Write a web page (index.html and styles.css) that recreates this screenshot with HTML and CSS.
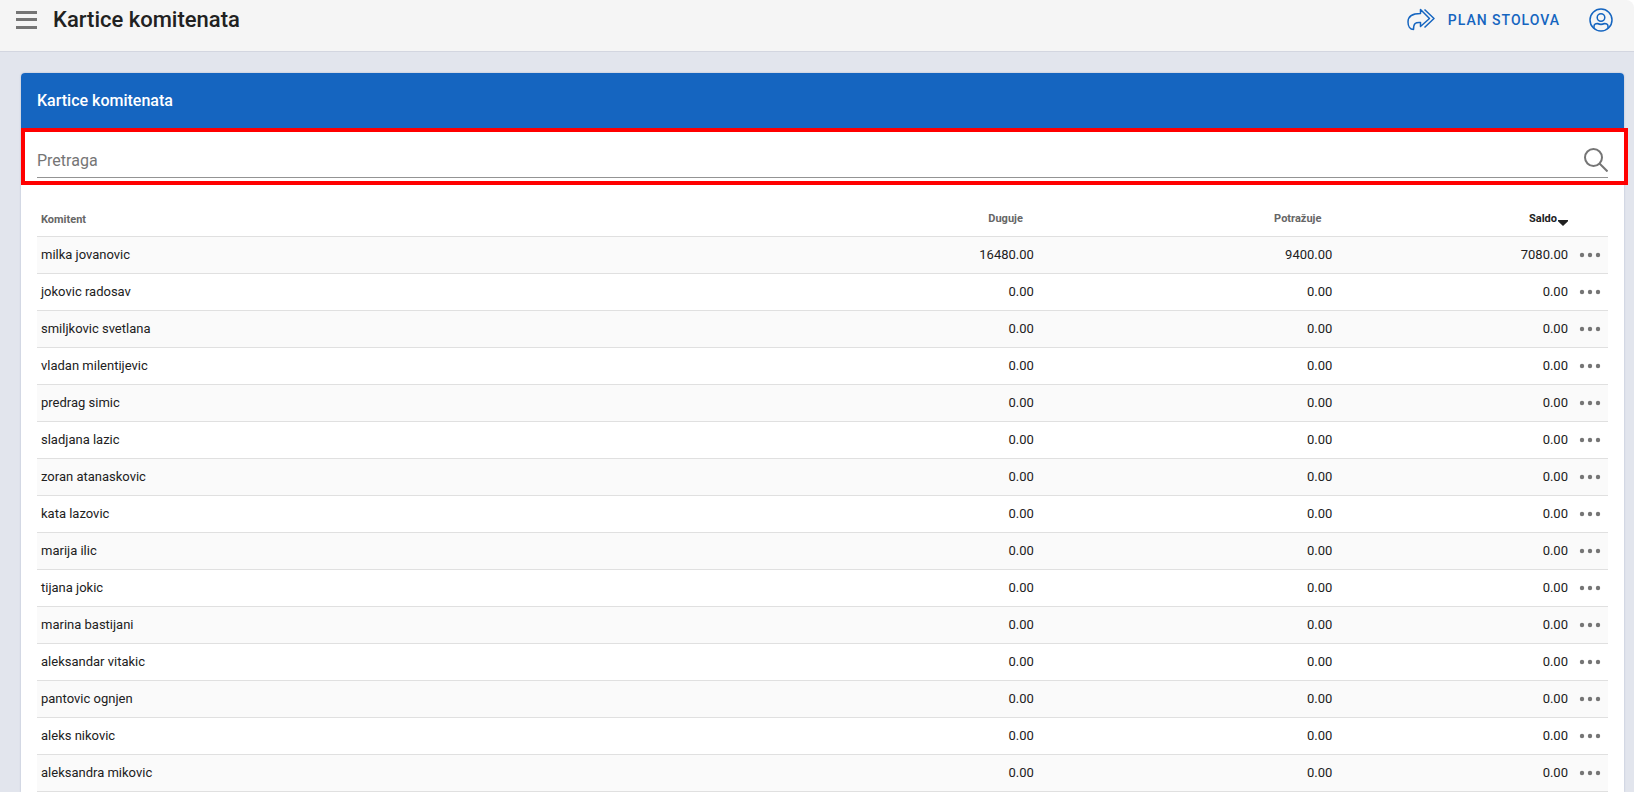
FILE: index.html
```html
<!DOCTYPE html>
<html lang="sr">
<head>
    <meta charset="UTF-8">
    <meta name="viewport" content="width=device-width, initial-scale=1.0">
    <title>Kartice komitenata</title>
    <link rel="stylesheet" href="styles.css">
</head>
<body>
    <header class="topbar">
        <button class="icon-btn menu" type="button" aria-label="Meni">
            <svg width="22" height="20" viewBox="0 0 22 20"><path d="M0 2.5h21M0 9.500h21M0 17.500h21"/></svg>
        </button>
        <h1>Kartice komitenata</h1>
        <a class="plan" href="#">
            <svg width="28" height="24" viewBox="0 0 28 24">
                <path d="M13.500 5.500V1.500L22.500 10.500L13.500 18.500V14.500C8.500 14 6.500 15.500 6.500 21.500C3 21.500 1 18 1 14C1 8.500 5 5.500 13.500 5.500Z"/>
                <path d="M17.500 1.500L27 10.500L17.500 19.500"/>
            </svg>
            Plan stolova
        </a>
        <button class="icon-btn user" type="button" aria-label="Nalog">
            <svg width="24" height="24" viewBox="0 0 24 24">
                <circle cx="12" cy="12" r="11"/>
                <circle cx="12" cy="9.500" r="3.800"/>
                <path d="M5 20.300V18.500C5 16.300 6.500 15.500 8.500 15.500C10.500 16.500 13.500 16.500 15.500 15.500C17.500 15.500 19 16.300 19 18.500V20.300"/>
            </svg>
        </button>
    </header>

    <main class="page">
        <div class="card">
            <h2>Kartice komitenata</h2>
            <form class="search">
                <div class="field">
                    <input type="text" placeholder="Pretraga" aria-label="Pretraga">
                    <button class="icon-btn" type="button" aria-label="Traži">
                        <svg width="24" height="24" viewBox="0 0 24 24"><circle cx="9.500" cy="9.500" r="8.500"/><path d="M15.500 15.500l8 8"/></svg>
                    </button>
                </div>
            </form>
            <div class="card-body">
                <table>
                    <thead>
                        <tr>
                            <th>Komitent</th>
                            <th class="num debit">Duguje</th>
                            <th class="num credit">Potražuje</th>
                            <th class="num saldo">Saldo</th>
                            <th class="actions"></th>
                        </tr>
                    </thead>
                    <tbody id="rows"></tbody>
                </table>
            </div>
        </div>
    </main>

    <script src="script.js"></script>
</body>
</html>
```
FILE: styles.css
```css
*{
    box-sizing: border-box;
}
body{
    margin: 0;
    padding-right: 4px;
    height: 100vh;
    overflow: hidden;
    background: #fff;
    font-family: Roboto, sans-serif;
    color: #212121;
    display: flex;
    flex-direction: column;
}
.icon-btn{
    padding: 0;
    border: 0;
    background: none;
    display: flex;
    cursor: pointer;
}
svg{
    fill: none;
    stroke-linejoin: round;
}
.topbar{
    flex: none;
    height: 52px;
    padding: 0 21px 12px 16px;
    background: #f5f5f5;
    border-bottom: 1px solid #d3d6e0;
    border-radius: 0 8px 0 0;
    display: flex;
    align-items: center;
}
.menu svg{
    stroke: #757575;
    stroke-width: 3;
}
.topbar h1{
    margin: 0 auto 0 15px;
    font-size: 22px;
    font-weight: 500;
}
.plan{
    display: flex;
    align-items: center;
    gap: 13px;
    margin-right: 29px;
    color: #1565c0;
    font-size: 14px;
    font-weight: 500;
    letter-spacing: 1px;
    text-transform: uppercase;
    text-decoration: none;
}
.plan svg, .user svg{
    stroke: #1565c0;
    stroke-width: 1.5;
}
.page{
    flex: 1;
    min-height: 0;
    padding: 21px 10px 0 21px;
    background: #e2e5ed;
}
.card{
    height: 100%;
    border-radius: 4px 4px 0 0;
    background: #fff;
    box-shadow: 0 0 2px #aab2cc;
}
.card h2{
    margin: 0;
    padding: 0 16px;
    line-height: 55px;
    border-radius: 4px 4px 0 0;
    background: #1565c0;
    color: #fff;
    font-size: 16px;
    font-weight: 500;
}
.search{
    margin-right: -4px;
    padding: 8px 16px 3px 12px;
    border: 4px solid #f00;
}
.field{
    display: flex;
    align-items: center;
    height: 38px;
    padding-top: 3px;
    border-bottom: 1px solid #949494;
}
.field input{
    flex: 1;
    padding: 0;
    border: 0;
    outline: 0;
    background: none;
    font: 16px Roboto, sans-serif;
}
.field input::placeholder{
    color: #757575;
}
.field svg{
    stroke: #757575;
    stroke-width: 2;
}
.card-body{
    padding: 15px 16px 0;
}
table{
    width: 100%;
    table-layout: fixed;
    border-collapse: separate;
    border-spacing: 0;
    font-size: 13px;
}
th, td{
    height: 37px;
    padding: 0 4px 1px;
    border-bottom: 1px solid #e0e0e0;
    text-align: left;
}
th{
    padding-top: 3px;
    color: #666;
    font-size: 11px;
    font-weight: 700;
}
tbody tr:nth-child(odd){
    background: #fafafa;
}
.num{
    text-align: right;
}
.debit, .credit{
    width: 19%;
}
.saldo{
    width: 15%;
    color: #212121;
}
.actions{
    width: 36px;
}
/* sort arrow, only visible on the sorted column */
th.num::after{
    content: "";
    display: inline-block;
    width: 10px;
    height: 6px;
    margin-left: 1px;
    vertical-align: -4px;
}
th.saldo::after{
    background: #212121;
    clip-path: polygon(0 0, 100% 0, 100% 20%, 50% 100%, 0 20%);
}
td .icon-btn{
    margin-left: 3px;
}
td svg{
    fill: #757575;
}
```
FILE: script.js
```js
const data = [
    ['milka jovanovic', 16480, 9400],
    ['jokovic radosav', 0, 0],
    ['smiljkovic svetlana', 0, 0],
    ['vladan milentijevic', 0, 0],
    ['predrag simic', 0, 0],
    ['sladjana lazic', 0, 0],
    ['zoran atanaskovic', 0, 0],
    ['kata lazovic', 0, 0],
    ['marija ilic', 0, 0],
    ['tijana jokic', 0, 0],
    ['marina bastijani', 0, 0],
    ['aleksandar vitakic', 0, 0],
    ['pantovic ognjen', 0, 0],
    ['aleks nikovic', 0, 0],
    ['aleksandra mikovic', 0, 0]
];

const dots = '<svg width="22" height="6" viewBox="0 0 22 6"><circle cx="3" cy="3" r="2.2"/><circle cx="11" cy="3" r="2.2"/><circle cx="19" cy="3" r="2.2"/></svg>';

document.getElementById('rows').innerHTML = data.map(([name, debit, credit]) => `
    <tr>
        <td>${name}</td>
        <td class="num">${debit.toFixed(2)}</td>
        <td class="num">${credit.toFixed(2)}</td>
        <td class="num">${(debit - credit).toFixed(2)}</td>
        <td><button class="icon-btn" type="button" aria-label="Opcije">${dots}</button></td>
    </tr>`).join('');
```
